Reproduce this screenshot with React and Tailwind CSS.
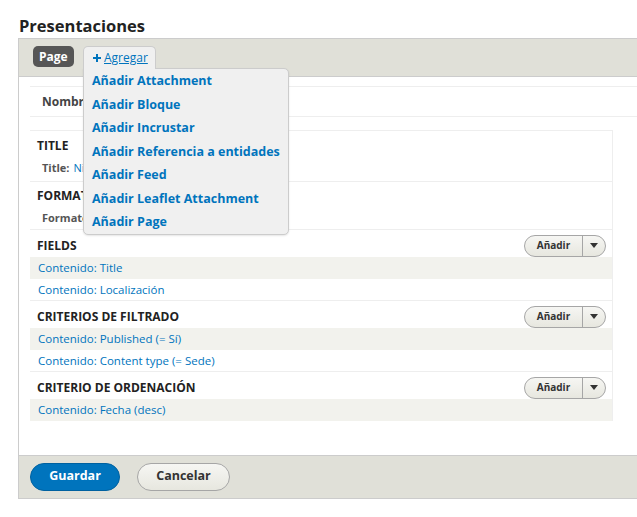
import { useState } from 'react'

const rows = [
  {
    title: 'FIELDS',
    items: ['Contenido: Title', 'Contenido: Localización'],
  },
  {
    title: 'CRITERIOS DE FILTRADO',
    items: ['Contenido: Published (= Sí)', 'Contenido: Content type (= Sede)'],
  },
  {
    title: 'CRITERIO DE ORDENACIÓN',
    items: ['Contenido: Fecha (desc)'],
  },
]

const menuItems = [
  'Añadir Attachment',
  'Añadir Bloque',
  'Añadir Incrustar',
  'Añadir Referencia a entidades',
  'Añadir Feed',
  'Añadir Leaflet Attachment',
  'Añadir Page',
]

function AddButton() {
  return (
    <div className="flex h-[22px] w-[82px] items-stretch rounded-full border border-[#a6a6a6] bg-gradient-to-b from-[#f6f6f3] to-[#e7e7df] text-[10px] font-bold text-[#333]">
      <span className="flex flex-1 items-center justify-center">Añadir</span>
      <span className="flex w-[23px] items-center justify-center border-l border-[#a6a6a6]">
        <svg width="8" height="5" viewBox="0 0 8 5">
          <path d="M0 0h8L4 5z" fill="#333" />
        </svg>
      </span>
    </div>
  )
}

export default function App() {
  const [open] = useState(true)

  return (
    <div className="relative h-[517px] w-[637px] overflow-hidden bg-white font-['Open_Sans',sans-serif] text-[#222]">
      <h2 className="pl-[19px] pt-[15px] text-[16.5px] font-bold leading-[22px]">Presentaciones</h2>

      <div className="ml-[18px] mt-[1px] w-[640px] border-y border-l border-[#ccc]">
        {/* tabs */}
        <div className="flex h-[38px] items-start gap-[11px] border-b border-[#ccc] bg-[#e0e0d8] pl-[14px] pt-[7px]">
          <span className="flex h-[21px] items-center rounded-[5px] bg-[#565656] px-[6px] text-[12px] font-bold text-white">Page</span>
          <span className="h-[31px] w-[73px]" />
        </div>

        <div className="bg-white px-[11px] pb-[34px] pt-[9px]">
          <div className="flex h-[31px] items-center border-y border-[#eee] pl-[12px] text-[12px] font-bold text-[#444]">
            Nombre de la pantalla: Page
          </div>

          <div className="mt-[13px] w-[583px] border-r border-[#eee]">
            <div className="border-t border-[#eee] pb-[2px]">
              <div className="flex h-[26px] items-center pl-[7px] pt-[3px] text-[12px] font-bold">TITLE</div>
              <div className="flex h-[22px] items-center pl-[12px] text-[11px]">
                <span className="font-bold text-[#555]">Title:</span>
                <span className="ml-[4px] text-[#0074bd]">Ninguno</span>
              </div>
            </div>
            <div className="border-t border-[#eee]">
              <div className="flex h-[26px] items-center pl-[7px] pt-[2px] text-[12px] font-bold">FORMAT</div>
              <div className="flex h-[21px] items-center pl-[12px] text-[11px]">
                <span className="font-bold text-[#555]">Formato:</span>
                <span className="ml-[4px] text-[#0074bd]">Lista</span>
              </div>
            </div>
            {rows.map((section) => (
              <div key={section.title} className="border-t border-[#eee]">
                <div className="flex h-[27px] items-center justify-between pl-[7px] pr-[6px] pt-[4px] text-[12px] font-bold">
                  <span>{section.title}</span>
                  <AddButton />
                </div>
                {section.items.map((item, i) => (
                  <div
                    key={item}
                    className={`flex h-[21.5px] items-center pl-[8px] text-[11.5px] text-[#0074bd] ${i % 2 === 0 ? 'bg-[#f2f2ed]' : 'bg-white'}`}
                  >
                    {item}
                  </div>
                ))}
              </div>
            ))}
          </div>
        </div>

        {/* actions */}
        <div className="flex h-[43px] items-center gap-[17px] border-t border-[#ccc] bg-[#e0e0d8] pl-[11px]">
          <button className="h-[28px] w-[90px] rounded-full border border-[#0061a0] bg-[#0074bd] text-[12.5px] font-bold text-white">
            Guardar
          </button>
          <button className="h-[28px] w-[93px] rounded-full border border-[#a6a6a6] bg-gradient-to-b from-[#f6f6f3] to-[#e7e7df] text-[12.5px] font-bold text-[#333]">
            Cancelar
          </button>
        </div>
      </div>

      {/* Agregar dropdown */}
      {open && (
        <div className="absolute left-[83px] top-[46px]">
          <div className="relative z-10 flex h-[23px] w-[73px] items-center gap-[3px] rounded-t-[5px] border-x border-t border-[#ccc] bg-[#f0f0f0] pl-[9px] text-[12px] text-[#0074bd]">
            <svg width="8" height="8" viewBox="0 0 8 8">
              <path d="M3 0h2v3h3v2H5v3H3V5H0V3h3z" fill="#0074bd" />
            </svg>
            <span className="underline">Agregar</span>
          </div>
          <div className="-mt-px w-[206px] rounded-b-[5px] rounded-tr-[5px] border border-[#ccc] bg-[#f0f0f0] pl-[8px] shadow-[0_1px_2px_rgba(0,0,0,0.1)]">
            {menuItems.map((item) => (
              <div key={item} className="h-[23.5px] text-[12.5px] font-bold leading-[23px] text-[#0074bd]">
                {item}
              </div>
            ))}
          </div>
        </div>
      )}
    </div>
  )
}
